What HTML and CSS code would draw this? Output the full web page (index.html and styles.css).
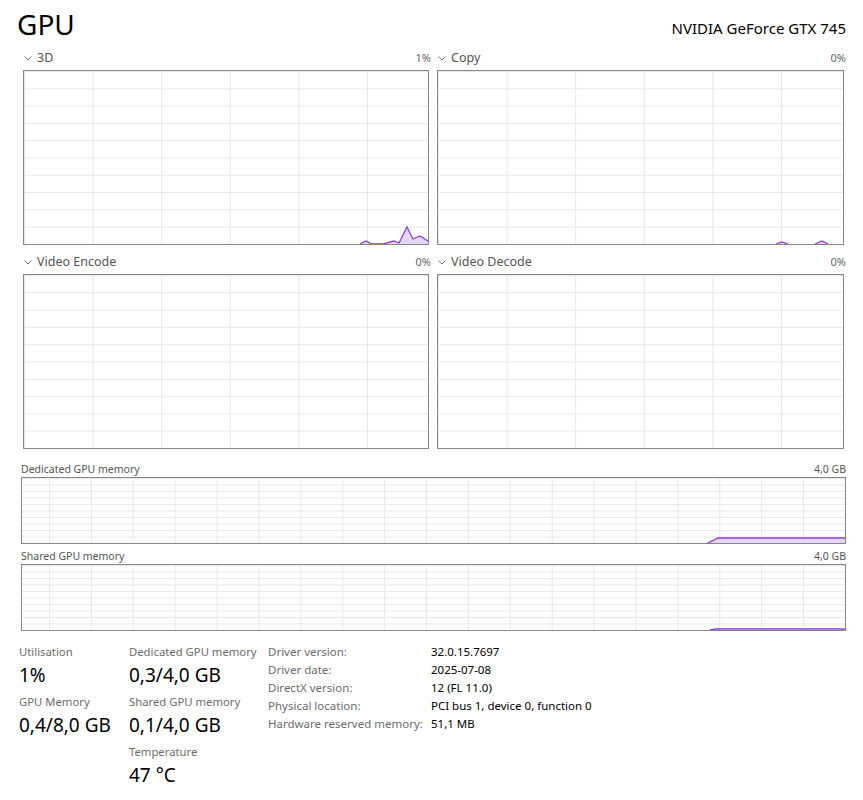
FILE: index.html
```html
<!DOCTYPE html>
<html lang="en">
<head>
<meta charset="UTF-8">
<meta name="viewport" content="width=device-width, initial-scale=1.0">
<title>GPU</title>
<link rel="stylesheet" href="styles.css">
</head>
<body>

<div class="page">
    <div class="header">
        <h1>GPU</h1>
        <div class="device">NVIDIA GeForce GTX 745</div>
    </div>

    <div class="engines">
        <div class="engine">
            <div class="engine-label">
                <span class="name"><svg class="chevron" width="8" height="5" viewBox="0 0 8 5"><polyline points="0.5,0.5 4,4 7.5,0.5" /></svg>3D</span>
                <span class="pct">1%</span>
            </div>
            <div class="graph">
                <svg class="plot" viewBox="0 0 404 173" preserveAspectRatio="none">
                    <polygon class="fill" points="336,173 342,170 348,173 359,173 370,170 375,172 383,156 389,168 396,165 404,170 404,173" />
                    <polyline class="line" points="336,173 342,170 348,173 359,173 370,170 375,172 383,156 389,168 396,165 404,170" />
                </svg>
            </div>
        </div>
        <div class="engine">
            <div class="engine-label">
                <span class="name"><svg class="chevron" width="8" height="5" viewBox="0 0 8 5"><polyline points="0.5,0.5 4,4 7.5,0.5" /></svg>Copy</span>
                <span class="pct">0%</span>
            </div>
            <div class="graph">
                <svg class="plot" viewBox="0 0 405 173" preserveAspectRatio="none">
                    <polygon class="fill" points="338,173 344,171 350,173 377,173 384,170 390,173" />
                    <polyline class="line" points="338,173 344,171 350,173" />
                    <polyline class="line" points="377,173 384,170 390,173" />
                </svg>
            </div>
        </div>
        <div class="engine">
            <div class="engine-label">
                <span class="name"><svg class="chevron" width="8" height="5" viewBox="0 0 8 5"><polyline points="0.5,0.5 4,4 7.5,0.5" /></svg>Video Encode</span>
                <span class="pct">0%</span>
            </div>
            <div class="graph"></div>
        </div>
        <div class="engine">
            <div class="engine-label">
                <span class="name"><svg class="chevron" width="8" height="5" viewBox="0 0 8 5"><polyline points="0.5,0.5 4,4 7.5,0.5" /></svg>Video Decode</span>
                <span class="pct">0%</span>
            </div>
            <div class="graph"></div>
        </div>
    </div>

    <div class="memory">
        <div class="memory-label">
            <span>Dedicated GPU memory</span>
            <span>4,0 GB</span>
        </div>
        <div class="graph small">
            <svg class="plot" viewBox="0 0 823 65" preserveAspectRatio="none">
                <polygon class="fill" points="684,66 696,60 823,60 823,66" />
                <polyline class="line" points="684,66 696,60 823,60" />
            </svg>
        </div>

        <div class="memory-label">
            <span>Shared GPU memory</span>
            <span>4,0 GB</span>
        </div>
        <div class="graph small">
            <svg class="plot" viewBox="0 0 823 65" preserveAspectRatio="none">
                <polyline class="line" points="688,65 694,64 823,64" />
            </svg>
        </div>
    </div>

    <div class="stats">
        <div class="stat-col">
            <div class="stat">
                <div class="stat-label">Utilisation</div>
                <div class="stat-value">1%</div>
            </div>
            <div class="stat">
                <div class="stat-label">GPU Memory</div>
                <div class="stat-value">0,4/8,0 GB</div>
            </div>
        </div>
        <div class="stat-col second">
            <div class="stat">
                <div class="stat-label">Dedicated GPU memory</div>
                <div class="stat-value">0,3/4,0 GB</div>
            </div>
            <div class="stat">
                <div class="stat-label">Shared GPU memory</div>
                <div class="stat-value">0,1/4,0 GB</div>
            </div>
            <div class="stat">
                <div class="stat-label">Temperature</div>
                <div class="stat-value">47 °C</div>
            </div>
        </div>
        <table class="details">
            <tr><td>Driver version:</td><td>32.0.15.7697</td></tr>
            <tr><td>Driver date:</td><td>2025-07-08</td></tr>
            <tr><td>DirectX version:</td><td>12 (FL 11.0)</td></tr>
            <tr><td>Physical location:</td><td>PCI bus 1, device 0, function 0</td></tr>
            <tr><td>Hardware reserved memory:</td><td>51,1 MB</td></tr>
        </table>
    </div>
</div>

</body>
</html>
```

FILE: styles.css
```css
body {
    margin: 0;
    padding: 0;
    background-color: #fff;
    font-family: "Noto Sans", "Open Sans", sans-serif;
    color: #000;
}

.page {
    width: 863px;
}

.header {
    display: flex;
    justify-content: space-between;
    align-items: flex-end;
    padding: 6px 17px 0 17px;
    height: 42px;
    box-sizing: border-box;
}

h1 {
    margin: 0;
    font-size: 28px;
    font-weight: normal;
    line-height: 36px;
}

.device {
    font-size: 15px;
    line-height: 20px;
    margin-bottom: 4px;
}

.engines {
    display: grid;
    grid-template-columns: 406px 407px;
    column-gap: 8px;
    row-gap: 9px;
    margin-left: 23px;
    margin-top: 8px;
}

.engine-label {
    display: flex;
    justify-content: space-between;
    font-size: 12.5px;
    line-height: 16px;
    color: #555;
    margin-bottom: 4px;
}

.engine-label .name {
    display: flex;
    align-items: center;
}

.engine-label .pct {
    font-size: 11px;
    color: #666;
    margin-right: -2px;
}

.chevron {
    margin: 0 5px 0 1px;
    fill: none;
    stroke: #777;
    stroke-width: 1;
}

.graph {
    position: relative;
    height: 175px;
    border: 1px solid #878787;
    box-sizing: border-box;
    background-image:
        linear-gradient(to right, transparent calc(100% - 1px), #e8e8e8 0),
        linear-gradient(to bottom, #e8e8e8 1px, transparent 1px);
    background-size: 68.6px 100%, 100% 17.3px;
    background-position: 1px 0, 0 0;
}

.graph.small {
    height: 67px;
    background-size: 41.9px 100%, 100% 6.5px;
    background-position: -13.9px 0, 0 0;
}

.plot {
    display: block;
    width: 100%;
    height: 100%;
}

.plot .fill {
    fill: #e6d6f6;
}

.plot .line {
    fill: none;
    stroke: #8b40d4;
    stroke-width: 1.3;
}

.memory {
    margin: 14px 17px 0 21px;
}

.memory-label {
    display: flex;
    justify-content: space-between;
    font-size: 10.5px;
    line-height: 13px;
    color: #555;
    margin-bottom: 1px;
}

.graph.small + .memory-label {
    margin-top: 6px;
}

.stats {
    display: flex;
    align-items: flex-start;
    margin: 13px 0 0 19px;
}

.stat-col {
    width: 110px;
}

.stat-col.second {
    width: 139px;
}

.stat {
    margin-bottom: 4px;
}

.stat-label {
    font-size: 11.3px;
    line-height: 16px;
    color: #6d6d6d;
    white-space: nowrap;
}

.stat-value {
    font-size: 19px;
    line-height: 30px;
}

.details {
    border-collapse: collapse;
    font-size: 11.5px;
    margin-top: -1px;
}

.details td {
    padding: 0;
    height: 18px;
    line-height: 18px;
    white-space: nowrap;
}

.details td:first-child {
    color: #6d6d6d;
    width: 163px;
}
```
